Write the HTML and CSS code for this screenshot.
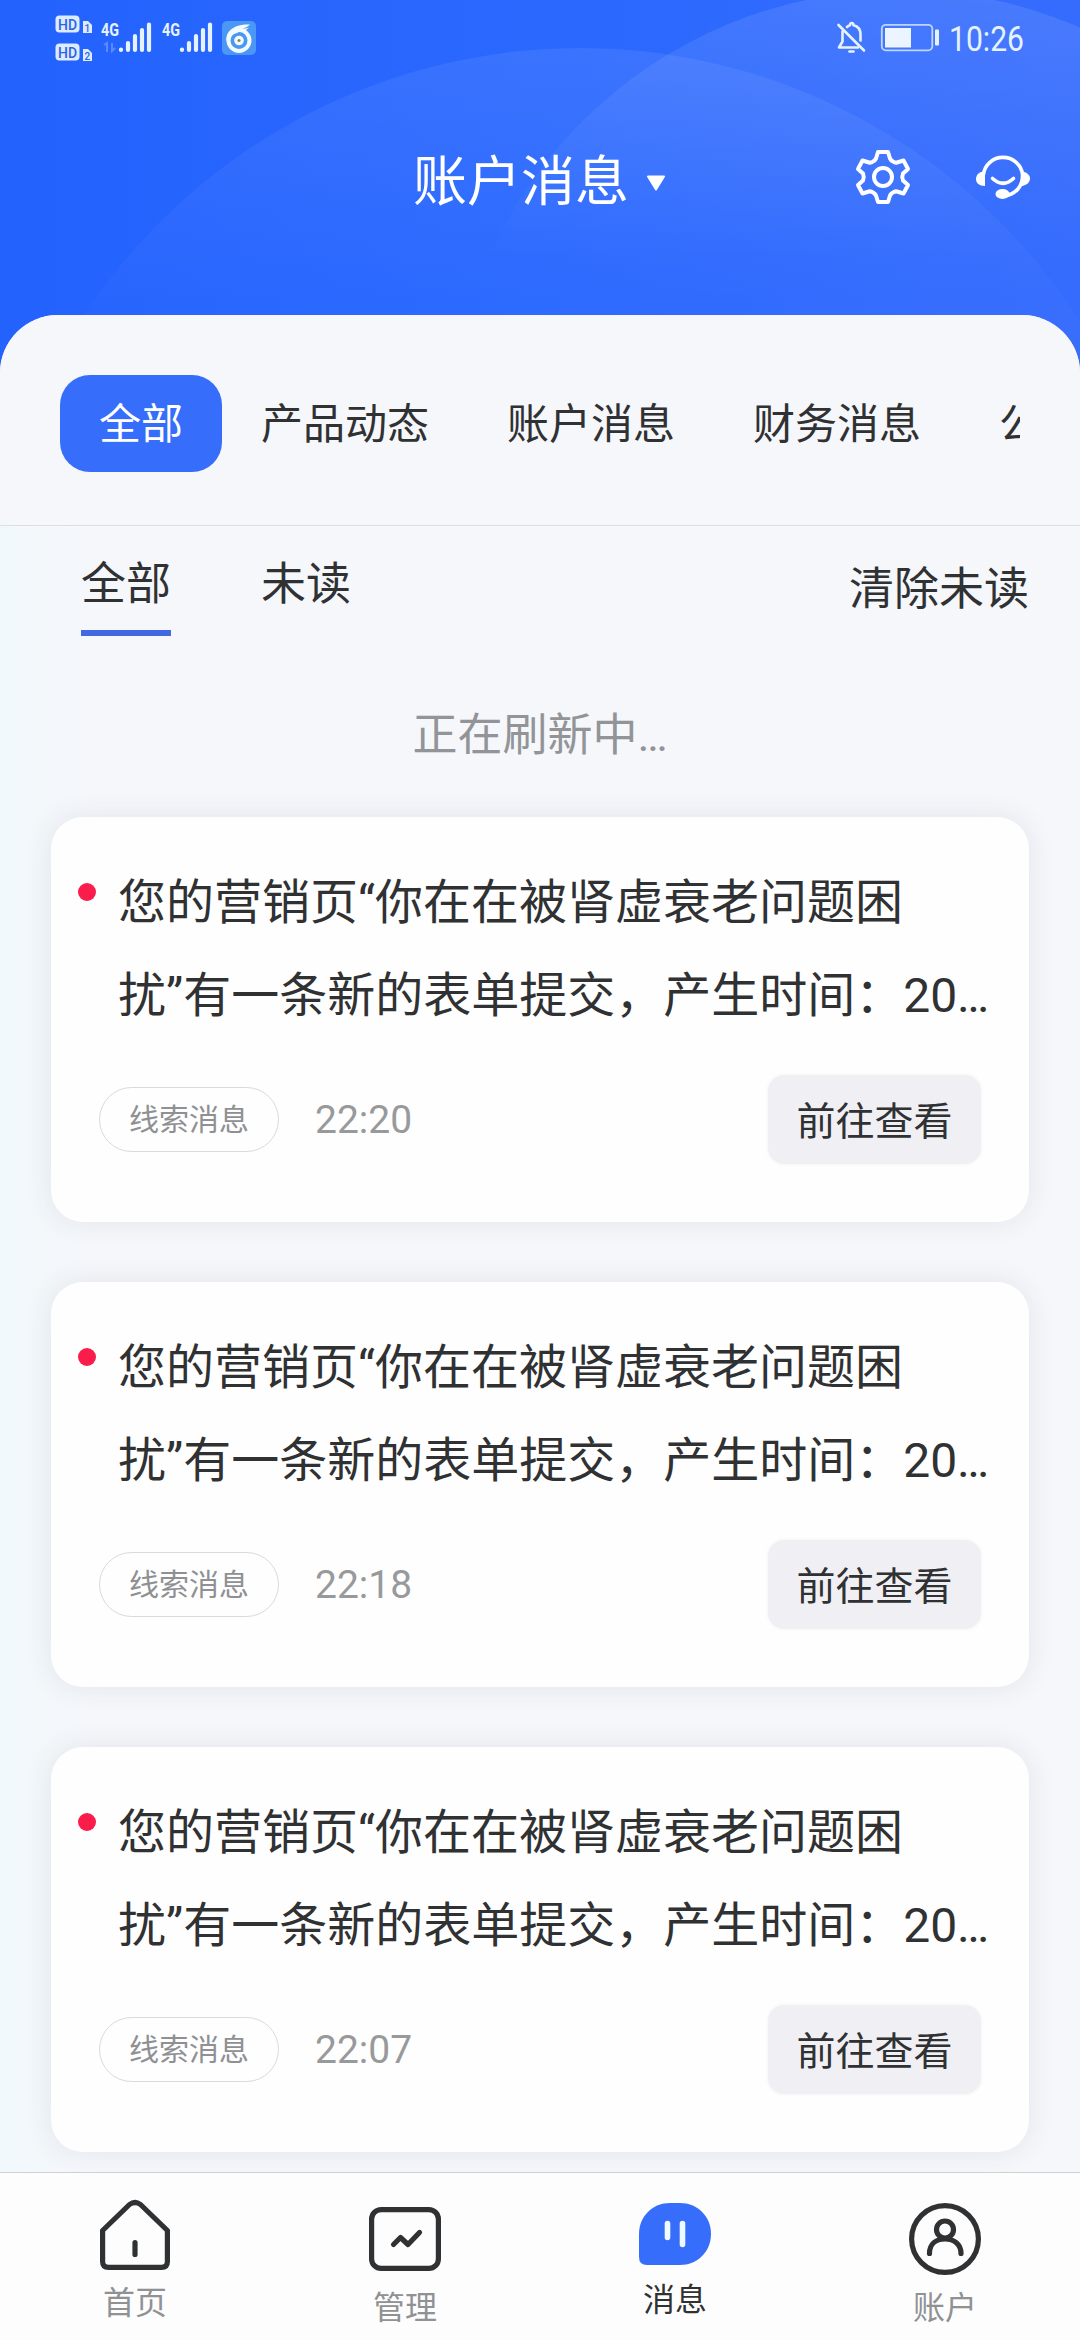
FILE: index.html
```html
<!DOCTYPE html>
<html lang="zh-CN">
<head>
<meta charset="utf-8">
<title>账户消息</title>
<link rel="stylesheet" href="styles.css">
</head>
<body>
<div class="screen">
  <svg class="backdrop" width="1080" height="400" viewBox="0 0 1080 400" aria-hidden="true">
    <defs>
      <linearGradient id="base" x1="0" y1="0" x2="1" y2="0"><stop offset="0" stop-color="#2462fe"/><stop offset=".5" stop-color="#2a68fe"/><stop offset="1" stop-color="#366cfd"/></linearGradient>
      <linearGradient id="fade" gradientUnits="userSpaceOnUse" x1="0" y1="40" x2="0" y2="300"><stop offset="0" stop-color="#fff" stop-opacity=".075"/><stop offset="1" stop-color="#fff" stop-opacity=".015"/></linearGradient>
      <linearGradient id="fade2" gradientUnits="userSpaceOnUse" x1="0" y1="0" x2="0" y2="260"><stop offset="0" stop-color="#fff" stop-opacity=".1"/><stop offset="1" stop-color="#fff" stop-opacity="0"/></linearGradient>
    </defs>
    <rect width="1080" height="400" fill="url(#base)"/>
    <circle cx="580" cy="642" r="594" fill="url(#fade)"/>
    <circle cx="900" cy="440" r="450" fill="url(#fade2)"/>
  </svg>

  <header class="header">
    <div class="status">
      <svg class="status-left" width="204" height="64" viewBox="52 8 204 64">
        <g fill="#dcebff">
          <rect x="55.500" y="15.500" width="24" height="17" rx="4"/>
          <rect x="55.500" y="43.500" width="24" height="17" rx="4"/>
          <path d="M83 21h5l4 4v8h-9zM83 49h5l4 4v8h-9z"/>
        </g>
        <g class="hd">
          <text x="58" y="30" font-size="15.500" textLength="19" lengthAdjust="spacingAndGlyphs">HD</text>
          <text x="58" y="58" font-size="15.500" textLength="19" lengthAdjust="spacingAndGlyphs">HD</text>
          <text x="84.500" y="31.500" font-size="10">1</text>
          <text x="84.500" y="59.500" font-size="10">2</text>
        </g>
        <g class="net">
          <text x="101" y="36" font-size="19" textLength="18" lengthAdjust="spacingAndGlyphs">4G</text>
          <text x="162" y="36" font-size="19" textLength="18" lengthAdjust="spacingAndGlyphs">4G</text>
        </g>
        <path d="M104 45l3-2v9M112 43v8l3-3" fill="none" stroke="#5a8cff" stroke-width="2"/>
        <g stroke="#e6f3ff" stroke-width="4.200" stroke-linecap="round">
          <path d="M121 49.500v.5M128 43v7M135 36v14M142 30v20M149 24.500v25.500"/>
          <path d="M182 49.500v.5M189 43v7M196 36v14M203 30v20M210 24.500v25.500"/>
        </g>
        <rect x="222" y="21" width="34" height="34" rx="5" fill="#4a97f5"/>
        <circle cx="239" cy="40.500" r="10.500" fill="none" stroke="#f2fbff" stroke-width="4"/>
        <path d="M226.500 41c-1-9 6-17 23.500-16.500c-3 3-5 3.500-8 4c3 0 5 0 7-1c-3 4-9 3.500-12 5.500c-4 1-8 3-10.500 8z" fill="#f2fbff"/>
        <circle cx="239" cy="40.500" r="4.800" fill="#f2fbff"/>
        <circle cx="239" cy="40.500" r="1.600" fill="#8a8a5a"/>
      </svg>
      <svg class="status-right" width="222" height="64" viewBox="833 8 222 64">
        <g fill="none" stroke="#e6f3ff" stroke-width="2.600" stroke-linecap="round" stroke-linejoin="round">
          <path d="M838.500 25L864 50.500"/>
          <path d="M842.500 31.500v10l-3.500 6h19M847 27c1-1 2-1.500 3-1.700c0-3 3.500-3 3.500 0c5 1.200 7 5 7 9.200v6"/>
          <path d="M849.500 51.500h4"/>
        </g>
        <rect x="881.800" y="24.800" width="50.500" height="25.500" rx="4" fill="none" stroke="#bcd6ff" stroke-width="1.800"/>
        <rect x="885" y="28" width="26" height="19.500" fill="#ecf4ff"/>
        <rect x="935" y="29.500" width="4" height="16" rx="1" fill="#e6f3ff"/>
        <text class="clock" x="949" y="50.500" font-size="35" textLength="75" lengthAdjust="spacingAndGlyphs">10:26</text>
      </svg>
    </div>
    <div class="titlebar">
      <h1 class="title">账户消息</h1>
      <svg class="caret" width="20" height="17" viewBox="0 0 20 17"><path d="M2 1.500h16L10 14.500z" fill="#fff" stroke="#fff" stroke-width="2" stroke-linejoin="round"/></svg>
      <div class="actions">
        <svg width="56" height="58" viewBox="-28 -29 56 58" fill="none" stroke="#fff" stroke-width="4" stroke-linejoin="round">
          <path d="M-5 -25H5L7 -18.500Q8 -16.500 10 -15.500Q12 -14 14 -14.500L20.500 -16.500L25 -8L20 -3.500Q18.500 0 20 3.500L25 8L20.500 16.500L14 14.500Q12 14 10 15.500Q8 16.500 7 18.500L5 25H-5L-7 18.500Q-8 16.500 -10 15.500Q-12 14 -14 14.500L-20.500 16.500L-25 8L-20 3.500Q-18.500 0 -20 -3.500L-25 -8L-20.500 -16.500L-14 -14.500Q-12 -14 -10 -15.500Q-8 -16.500 -7 -18.500Z"/>
          <circle r="9"/>
        </svg>
        <svg width="56" height="46" viewBox="0 0 56 46" fill="none" stroke="#fff" stroke-width="3.600" stroke-linecap="round">
          <path d="M8.500 20.500a19.600 19 0 0 1 39 0C48 32 41 40.500 29 42"/>
          <path d="M17.500 24.500Q28 34 38.500 24.500"/>
          <path d="M10 17.500v14.500C4 32 1 29 1 25s3-7.500 9-7.500z" fill="#fff" stroke="none"/>
          <path d="M46.500 17.500c5.500.5 8.500 3.500 8.500 7s-3 7-8.500 7.500z" fill="#fff" stroke="none"/>
          <ellipse cx="27.500" cy="40" rx="7" ry="5" fill="#fff" stroke="none"/>
        </svg>
      </div>
    </div>
  </header>

  <main class="panel">
    <nav class="tabs">
      <span class="tab tab-on">全部</span><span class="tab">产品动态</span><span class="tab">账户消息</span><span class="tab">财务消息</span><span class="tab">公</span>
    </nav>
    <div class="filters">
      <span class="filter filter-on">全部</span>
      <span class="filter">未读</span>
      <span class="clear">清除未读</span>
    </div>
    <p class="refresh">正在刷新中…</p>
    <section class="list">
      <article class="card">
        <i class="dot"></i>
        <p class="msg">您的营销页“你在在被肾虚衰老问题困<br>扰”有一条新的表单提交，产生时间：20…</p>
        <div class="meta"><span class="tag">线索消息</span><time class="time">22:20</time><button class="go">前往查看</button></div>
      </article>
      <article class="card">
        <i class="dot"></i>
        <p class="msg">您的营销页“你在在被肾虚衰老问题困<br>扰”有一条新的表单提交，产生时间：20…</p>
        <div class="meta"><span class="tag">线索消息</span><time class="time">22:18</time><button class="go">前往查看</button></div>
      </article>
      <article class="card">
        <i class="dot"></i>
        <p class="msg">您的营销页“你在在被肾虚衰老问题困<br>扰”有一条新的表单提交，产生时间：20…</p>
        <div class="meta"><span class="tag">线索消息</span><time class="time">22:07</time><button class="go">前往查看</button></div>
      </article>
    </section>
  </main>

  <nav class="bottom">
    <a class="item item-home">
      <svg width="72" height="72" viewBox="0 0 72 72" fill="none" stroke="#303133" stroke-width="5.200" stroke-linecap="round" stroke-linejoin="round">
        <path d="M3.600 31.500L30.500 5.500Q36 1.500 41.500 5.500L68.400 31.500V62.500Q68.400 68.400 62.500 68.400H9.500Q3.600 68.400 3.600 62.500Z"/>
        <path d="M36 43.500v12"/>
      </svg>
      <span>首页</span>
    </a>
    <a class="item item-manage">
      <svg width="72" height="64" viewBox="0 0 72 64" fill="none" stroke="#303133" stroke-width="5.200" stroke-linecap="round" stroke-linejoin="round">
        <rect x="2.600" y="2.600" width="66.800" height="58.800" rx="9.500"/>
        <path d="M24.500 37.500L31.500 30.500L39 37.500L50.500 25.500"/>
      </svg>
      <span>管理</span>
    </a>
    <a class="item item-message">
      <svg width="72" height="62" viewBox="0 0 72 62">
        <path d="M31 0H41C58 0 72 13 72 31S58 62 41 62H8Q0 62 0 54V31C0 13 14 0 31 0Z" fill="#366dfb"/>
        <path d="M28.500 20.500v14M43.500 20.500v21" stroke="#effaff" stroke-width="5.600" stroke-linecap="round"/>
      </svg>
      <span>消息</span>
    </a>
    <a class="item item-account">
      <svg width="72" height="72" viewBox="0 0 72 72" fill="none" stroke="#303133" stroke-width="5.200" stroke-linecap="round">
        <circle cx="36" cy="36" r="33.400"/>
        <circle cx="36" cy="26.500" r="8.500"/>
        <path d="M20.500 50.500C20.500 41 27 36 36 36S52 41 52 50.500"/>
      </svg>
      <span>账户</span>
    </a>
  </nav>
</div>
</body>
</html>
```
FILE: styles.css
```css
* { box-sizing: border-box; margin: 0; padding: 0; }
body { background: #fff; }
.screen {
  position: relative;
  width: 1080px;
  height: 2340px;
  overflow: hidden;
  display: flex;
  flex-direction: column;
  font-family: Roboto, "Noto Sans CJK SC", sans-serif;
  color: #303133;
}
svg { display: block; flex: none; }
.backdrop { position: absolute; left: 0; top: 0; }
.header { position: relative; height: 315px; flex: none; }

.status { display: flex; justify-content: space-between; padding: 8px 25px 0 52px; }
.hd { fill: #2a63e8; font-weight: 500; }
.net { fill: #e6f3ff; font-weight: 700; }
.clock { fill: #e6f3ff; }

.titlebar { display: flex; align-items: center; padding: 70px 49px 0 413px; height: 152px; }
.title { font-size: 54px; font-weight: 400; line-height: 80px; color: #fff; }
.caret { margin: 0 0 0 17px; }
.actions { display: flex; align-items: center; gap: 64px; margin: -13px 0 0 auto; }

.panel {
  position: relative;
  flex: 1;
  min-height: 0;
  background: linear-gradient(90deg, #f1f8fb 0, #f5f7fb 100px);
  border-radius: 58px 58px 0 0;
  overflow: hidden;
}
.tabs {
  display: flex;
  height: 211px;
  padding: 60px 60px 0;
  border-bottom: 1px solid #dcdfe6;
  background: #f5f7fb;
}
.tab {
  flex: none;
  height: 97px;
  line-height: 99px;
  padding: 0 39px;
  font-size: 42px;
  white-space: nowrap;
}
.tab:last-child { flex: 0 0 60px; padding-right: 0; overflow: hidden; }
.tab-on { background: #366dfb; color: #fff; border-radius: 30px; }

.filters { display: flex; align-items: flex-start; gap: 90px; padding: 20px 51px 0 81px; font-size: 45px; height: 125px; }
.filter { height: 90px; line-height: 77px; }
.filter-on { border-bottom: 6px solid #4069e2; }
.clear { margin-left: auto; line-height: 88px; }
.refresh { height: 166px; padding-top: 49px; line-height: 72px; text-align: center; font-size: 45px; color: #929497; }

.list { display: flex; flex-direction: column; gap: 60px; padding: 0 51px; }
.card {
  position: relative;
  height: 405px;
  flex: none;
  padding: 39px 48px 0 48px;
  background: #fefefe;
  border-radius: 32px;
  box-shadow: 0 0 26px 2px rgba(70, 60, 80, .085);
}
.dot { position: absolute; left: 27px; top: 66px; width: 18px; height: 18px; border-radius: 50%; background: #fa1d4b; }
.msg { padding-left: 19px; font-size: 48px; line-height: 93px; white-space: nowrap; }
.meta { display: flex; align-items: center; margin-top: 33px; height: 89px; }
.tag { width: 180px; height: 65px; line-height: 63px; text-align: center; border: 1px solid #d9dade; border-radius: 33px; font-size: 30px; color: #8f9093; }
.time { margin-left: 36px; font-size: 39px; color: #98999b; }
.go { margin-left: auto; width: 213px; height: 89px; padding-top: 5px; border: 0; border-radius: 16px; background: #f0f0f4; color: #303133; font: 39px/84px Roboto, "Noto Sans CJK SC", sans-serif; box-shadow: 0 0 4px #f3f3f5; }

.bottom { position: relative; display: flex; flex: none; height: 168px; background: #fdfdfe; border-top: 1px solid #cbd1d5; }
.item { flex: 1; display: flex; flex-direction: column; align-items: center; font-size: 32px; line-height: 40px; color: #8f9193; }
.item-home { padding-top: 26px; }
.item-home span { margin-top: 12px; }
.item-manage { padding-top: 34px; }
.item-manage span { margin-top: 17px; }
.item-message { padding-top: 30px; color: #303133; }
.item-message span { margin-top: 15px; }
.item-account { padding-top: 30px; }
.item-account span { margin-top: 13px; }
```
